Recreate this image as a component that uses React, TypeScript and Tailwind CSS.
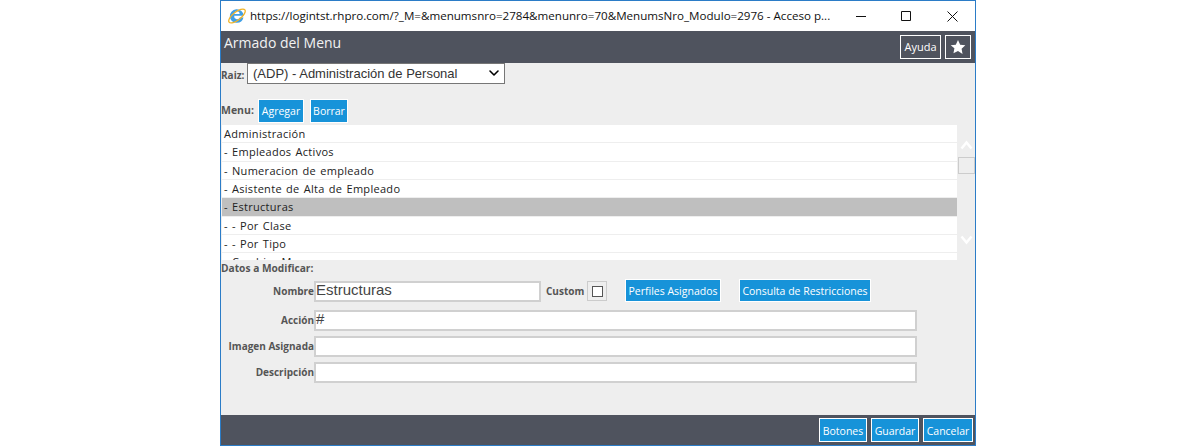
import { ChevronDown } from "lucide-react";

const items = [
  "Administración",
  "- Empleados Activos",
  "- Numeracion de empleado",
  "- Asistente de Alta de Empleado",
  "- Estructuras",
  "- - Por Clase",
  "- - Por Tipo",
  "- Cambiar Menu",
];

const ui = "font-['Open_Sans',sans-serif]";

function BlueButton({ children, className = "" }: { children: string; className?: string }) {
  return (
    <button
      className={`flex items-center justify-center border border-white bg-[#1793d9] text-[10.500px] leading-none whitespace-nowrap text-white ${className}`}
    >
      {children}
    </button>
  );
}

function IeLogo() {
  return (
    <svg width="18" height="18" viewBox="0 0 18 18">
      <path d="M1.800 9.800a7 7 0 0 1 14-1.100H6.200a3 3 0 0 0 5.600 1.900h3.700A7 7 0 0 1 1.800 9.800z" fill="#3f9fe6" />
      <path d="M6.200 7h5.400a2.700 2.700 0 0 0-5.400 0z" fill="#fff" />
      <ellipse cx="9" cy="9" rx="10" ry="4" transform="rotate(-38 9 9)" fill="none" stroke="#f0b429" strokeWidth="1.300" />
    </svg>
  );
}

function Field({ label, value, width = "w-[603px]" }: { label: string; value?: string; width?: string }) {
  return (
    <div className="flex items-center">
      <label className="mb-[2px] w-[93px] text-right text-[10px] leading-none font-bold text-[#555]">{label}</label>
      <div className={`h-[21px] border-2 border-[#d0d0d0] bg-white font-['Liberation_Sans',sans-serif] text-[15px] leading-[13px] text-[#444] ${width}`}>
        {value}
      </div>
    </div>
  );
}

export default function App() {
  return (
    <div className={`ml-[220px] flex h-[446px] w-[756px] flex-col border border-[#2b7cc7] bg-[#eeeeee] ${ui}`}>
      <div className="flex h-[30px] shrink-0 items-center bg-white">
        <div className="ml-[7px]">
          <IeLogo />
        </div>
        <div className="ml-[4px] w-[606px] text-[11.600px] whitespace-nowrap text-[#111]">
          https://logintst.rhpro.com/?_M=&amp;menumsnro=2784&amp;menunro=70&amp;MenumsNro_Modulo=2976 - Acceso p...
        </div>
        <div className="flex items-center gap-[35px]">
          <svg width="10" height="10" viewBox="0 0 10 10" stroke="#111" fill="none">
            <path d="M0 5.500h10" />
          </svg>
          <svg width="10" height="10" viewBox="0 0 10 10" stroke="#111" fill="none">
            <path d="M.5.500h9v9h-9z" />
          </svg>
          <svg width="11" height="11" viewBox="0 0 11 11" stroke="#111" fill="none" className="ml-px">
            <path d="M.5.500l10 10M10.500.500l-10 10" />
          </svg>
        </div>
      </div>

      <div className="flex h-[32px] shrink-0 items-center justify-between bg-[#4f535e] pr-[4px] pl-[3px]">
        <span className="mb-[10px] text-[14px] text-[#f2f2f2]">Armado del Menu</span>
        <div className="flex items-center gap-[4px]">
          <button className="flex h-[24px] w-[41px] items-center justify-center border border-white text-[11px] text-white">
            Ayuda
          </button>
          <button className="flex h-[24px] w-[26px] items-center justify-center border border-white text-white">
            <svg width="16" height="16" viewBox="0 0 24 24" fill="#fff">
              <path d="M12 1.500l3.300 7 7.700 1-5.600 5.300 1.400 7.700L12 18l-6.800 3.500 1.400-7.700L1 9.500l7.700-1z" />
            </svg>
          </button>
        </div>
      </div>

      <div className="flex min-h-0 flex-1 flex-col">
        <div className="flex h-[20px] items-center">
          <span className="mt-[4px] w-[26px] text-[10px] font-bold text-[#555]">Raiz:</span>
          <div className="flex h-[21px] w-[258px] shrink-0 items-center justify-between border border-[#767676] bg-white pr-[2px] pl-[5px] font-['Liberation_Sans',sans-serif] text-[13px] text-[#333]">
            <span className="mt-px">(ADP) - Administración de Personal</span>
            <ChevronDown size={16} strokeWidth={2.400} className="text-black" />
          </div>
        </div>

        <div className="mt-[16px] flex h-[24px] items-center">
          <span className="w-[37px] text-[10.500px] font-bold text-[#555]">Menu:</span>
          <BlueButton className="h-[24px] w-[46px]">Agregar</BlueButton>
          <BlueButton className="ml-[6px] h-[24px] w-[38px]">Borrar</BlueButton>
        </div>

        <div className="mt-[2px] flex h-[135px] shrink-0">
          <ul className="ml-px w-[735px] overflow-hidden bg-white">
            {items.map((item) => (
              <li
                key={item}
                className={`h-[18.350px] border-b border-[#eeeeee] pl-[2px] text-[11px] leading-[17px] tracking-[0.300px] [word-spacing:1px] text-[#222] ${item === "- Estructuras" ? "bg-[#bfbfbf]" : ""}`}
              >
                {item}
              </li>
            ))}
          </ul>
          <div className="ml-px flex w-[17px] flex-col items-center">
            <svg width="13" height="10" viewBox="0 0 13 10" className="mt-[15px]" fill="none" stroke="#fff" strokeWidth="2.500">
              <path d="M1.500 8.500l5-6 5 6" />
            </svg>
            <div className="mt-[7px] h-[17px] w-[17px] shrink-0 border border-[#cccccc] bg-[#eeeeee]" />
            <svg width="13" height="10" viewBox="0 0 13 10" className="mt-[61px]" fill="none" stroke="#fff" strokeWidth="2.500">
              <path d="M1.500 1.500l5 6 5-6" />
            </svg>
          </div>
        </div>

        <div className="mt-px h-[14px] text-[10.200px] leading-[14px] font-bold text-[#555]">Datos a Modificar:</div>

        <div className="mt-[4px] flex flex-col gap-[5px]">
          <div className="mb-[3px] flex items-end">
            <Field label="Nombre" value="Estructuras" width="w-[227px]" />
            <span className="mb-[3px] ml-[5px] w-[38px] text-[10px] leading-[15px] font-bold text-[#555]">Custom</span>
            <div className="mb-px ml-[3px] flex h-[20px] w-[20px] items-center justify-center border border-[#cccccc]">
              <div className="h-[11px] w-[11px] border border-[#555] bg-white" />
            </div>
            <BlueButton className="ml-[18px] h-[23px] w-[96px] pt-[2px]">Perfiles Asignados</BlueButton>
            <BlueButton className="ml-[18px] h-[23px] w-[132px] pt-[2px]">Consulta de Restricciones</BlueButton>
          </div>
          <Field label="Acción" value="#" />
          <Field label="Imagen Asignada" />
          <Field label="Descripción" />
        </div>
      </div>

      <div className="flex h-[30px] shrink-0 items-center justify-end gap-[4px] bg-[#4f535e] pr-[2px]">
        <BlueButton className="h-[24px] w-[48px] pt-[2px]">Botones</BlueButton>
        <BlueButton className="h-[24px] w-[48px] pt-[2px]">Guardar</BlueButton>
        <BlueButton className="h-[24px] w-[50px] pt-[2px]">Cancelar</BlueButton>
      </div>
    </div>
  );
}
